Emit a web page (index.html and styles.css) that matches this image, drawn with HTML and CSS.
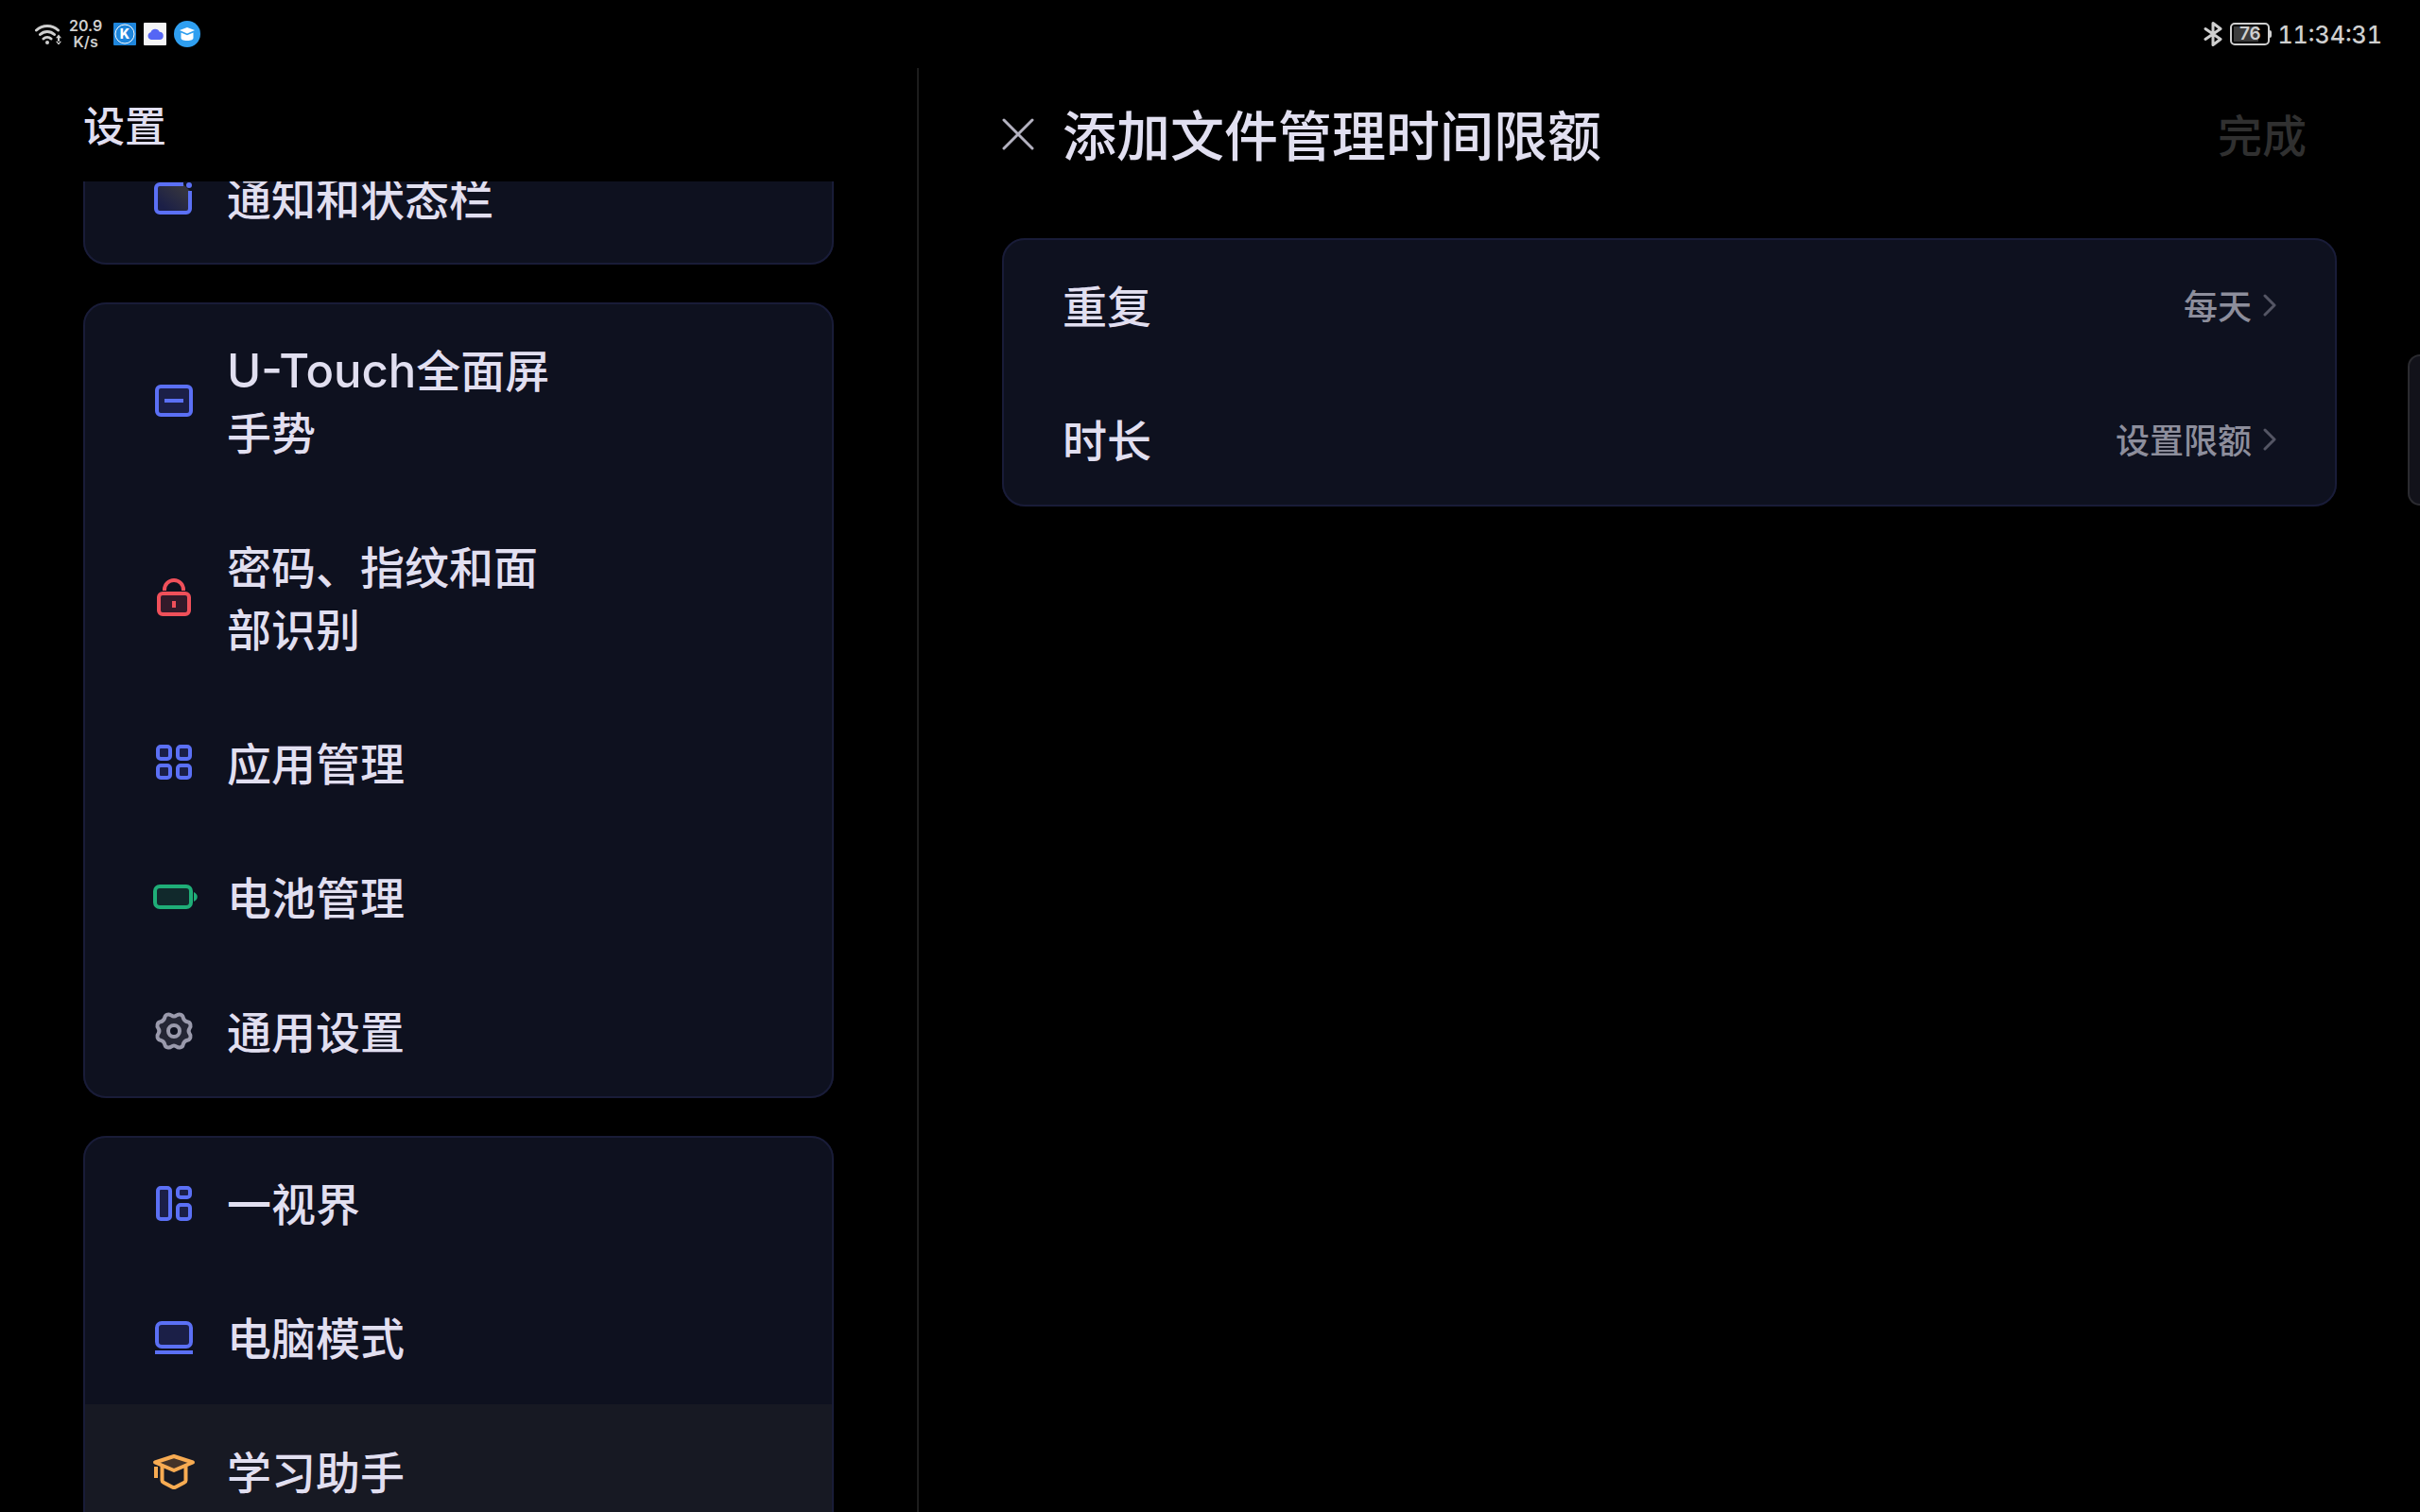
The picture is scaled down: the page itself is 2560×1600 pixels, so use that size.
FILE: index.html
```html
<!DOCTYPE html>
<html lang="zh-CN">
  <head>
    <meta charset="utf-8" />
    <title>设置</title>
    <meta name="viewport" content="width=device-width, initial-scale=1" />
    <link rel="stylesheet" href="styles.css" />
  </head>
  <body>
    <header class="status-bar">
      <div class="status-group">
        <svg class="wifi" viewBox="0 0 28 24" aria-hidden="true">
          <path d="M1.5 8a17 17 0 0 1 23 0M5.500 12.500a11 11 0 0 1 15 0M9 17a6 6 0 0 1 8 0" />
          <circle cx="13" cy="21" r="2" />
          <path class="solid" d="M25 12.500l3 3.700h-6zM25 23.500l3-3.700h-6zM24 15h2v6h-2z" />
        </svg>
        <div class="speed"><span>20.9</span><span>K/s</span></div>
        <svg class="app-icon app-k" viewBox="0 0 24 24" aria-hidden="true">
          <rect width="24" height="24" rx="1" fill="#1f86dc" />
          <circle cx="12" cy="12" r="10" fill="none" stroke="#fff" stroke-width="1" />
          <text x="12" y="17" text-anchor="middle">K</text>
        </svg>
        <svg class="app-icon" viewBox="0 0 24 24" aria-hidden="true">
          <rect width="24" height="24" rx="1" fill="#f4f4f6" />
          <path d="M8 18a4 4 0 0 1-.6-7.800A5 5 0 0 1 16.800 9.800 4.100 4.100 0 0 1 16.500 18z" fill="#5566f5" />
        </svg>
        <svg class="app-round" viewBox="0 0 28 28" aria-hidden="true">
          <circle cx="14" cy="14" r="14" fill="#2f9ff0" />
          <path d="M14 7l8 3-8 3.500-8-3.500zM7.500 12.500l6.500 2.800 6.500-2.800v5.500c0 2-2 3-6.500 3s-6.500-1-6.500-3z" fill="#fff" />
        </svg>
      </div>
      <div class="status-group">
        <svg class="bluetooth" viewBox="0 0 20 28" aria-hidden="true">
          <path d="M2 8.500l16 11-8 6v-23l8 6-16 11" />
        </svg>
        <div class="battery"><span>76</span></div>
        <time class="clock">11:34:31</time>
      </div>
    </header>

    <div class="layout">
      <aside class="sidebar">
        <h1 class="sidebar-title">设置</h1>
        <nav class="menu-view">
          <div class="menu">
            <div class="card">
              <a class="item" href="#">
                <svg class="icon blue" viewBox="0 0 48 48" aria-hidden="true">
                  <defs>
                    <linearGradient id="glow" x1="0" y1="1" x2="1" y2="0">
                      <stop offset="0.2" stop-color="#1b1f47" />
                      <stop offset="0.8" stop-color="#34343e" />
                    </linearGradient>
                  </defs>
                  <path fill="url(#glow)" d="M34 10H9a4 4 0 0 0-4 4v22a4 4 0 0 0 4 4h28a4 4 0 0 0 4-4V17" />
                  <circle class="dot" cx="40" cy="11" r="3" />
                </svg>
                <span class="label">通知和状态栏</span>
              </a>
            </div>

            <div class="card">
              <a class="item" href="#">
                <svg class="icon blue" viewBox="0 0 48 48" aria-hidden="true">
                  <rect x="6" y="9" width="36" height="30" rx="4" />
                  <path d="M14 24h20" />
                </svg>
                <span class="label"><span class="latin">U-Touch</span>全面屏手势</span>
              </a>
              <a class="item" href="#">
                <svg class="icon red" viewBox="0 0 48 48" aria-hidden="true">
                  <rect x="8" y="20" width="32" height="22" rx="4" />
                  <path class="line" d="M14 17v-1a10 10 0 0 1 20 0v1M24 28v7" />
                </svg>
                <span class="label">密码、指纹和面部识别</span>
              </a>
              <a class="item" href="#">
                <svg class="icon blue" viewBox="0 0 48 48" aria-hidden="true">
                  <rect x="7" y="7" width="13" height="13" rx="3" />
                  <rect x="28" y="7" width="13" height="13" rx="3" />
                  <rect x="7" y="27" width="13" height="13" rx="3" />
                  <rect x="28" y="27" width="13" height="13" rx="3" />
                </svg>
                <span class="label">应用管理</span>
              </a>
              <a class="item" href="#">
                <svg class="icon green" viewBox="0 0 48 48" aria-hidden="true">
                  <rect x="4" y="13" width="38" height="22" rx="5" />
                  <path class="dot" d="M45 19c5 2 5 8 0 10z" />
                </svg>
                <span class="label">电池管理</span>
              </a>
              <a class="item" href="#">
                <svg class="icon grey" viewBox="-24 -24 48 48" aria-hidden="true">
                  <path d="M-2.800-16.600Q0-14.500 2.800-16.600C5-18.600 9-17.300 9.500-15Q10.400-10.400 15-9.500C17.300-9 18.600-5 16.600-2.800Q14.500 0 16.600 2.800C18.600 5 17.300 9 15 9.500Q10.400 10.400 9.500 15C9 17.300 5 18.600 2.800 16.600Q0 14.500-2.800 16.600C-5 18.600-9 17.300-9.500 15Q-10.400 10.400-15 9.500C-17.300 9-18.600 5-16.600 2.800Q-14.500 0-16.600-2.800C-18.600-5-17.300-9-15-9.500Q-10.400-10.400-9.500-15C-9-17.300-5-18.600-2.800-16.600Z" />
                  <circle class="hole" r="6" />
                </svg>
                <span class="label">通用设置</span>
              </a>
            </div>

            <div class="card">
              <a class="item" href="#">
                <svg class="icon blue" viewBox="0 0 48 48" aria-hidden="true">
                  <rect x="7" y="8" width="13" height="33" rx="3" />
                  <rect x="28" y="8" width="13" height="10" rx="3" />
                  <rect x="28" y="26" width="13" height="15" rx="3" />
                </svg>
                <span class="label">一视界</span>
              </a>
              <a class="item" href="#">
                <svg class="icon blue" viewBox="0 0 48 48" aria-hidden="true">
                  <rect x="6" y="9" width="36" height="25" rx="5" />
                  <path d="M4 40h40" />
                </svg>
                <span class="label">电脑模式</span>
              </a>
              <a class="item selected" href="#" aria-current="page">
                <svg class="icon orange" viewBox="0 0 48 48" aria-hidden="true">
                  <path class="line" d="M11.500 19v14.500q0 1.500 1.500 2.200l9.500 5q1.500.7 3 0l9.500-5q1.500-.7 1.500-2.200V19" />
                  <path d="M24 8L4 14.500 24 23l20-8.500z" />
                  <path d="M5 19v12" />
                </svg>
                <span class="label">学习助手</span>
              </a>
            </div>
          </div>
        </nav>
      </aside>

      <main class="detail">
        <div class="toolbar">
          <button class="close" type="button" aria-label="关闭">
            <svg viewBox="0 0 34 34" aria-hidden="true"><path d="M2 2l30 30M32 2L2 32" /></svg>
          </button>
          <h2 class="toolbar-title">添加文件管理时间限额</h2>
          <button class="done" type="button" disabled>完成</button>
        </div>
        <div class="card">
          <button class="option" type="button">
            <span class="option-name">重复</span>
            <span class="option-value">每天</span>
            <svg class="chevron" viewBox="0 0 14 24" aria-hidden="true"><path d="M2 2l10 10L2 22" /></svg>
          </button>
          <button class="option" type="button">
            <span class="option-name">时长</span>
            <span class="option-value">设置限额</span>
            <svg class="chevron" viewBox="0 0 14 24" aria-hidden="true"><path d="M2 2l10 10L2 22" /></svg>
          </button>
        </div>
      </main>
    </div>

    <div class="edge-panel"></div>
  </body>
</html>
```

FILE: styles.css
```css
* {
  box-sizing: border-box;
}
body {
  margin: 0;
  height: 100vh;
  display: flex;
  flex-direction: column;
  position: relative;
  overflow: hidden;
  background-color: #000;
  color: #e1dff0;
  font-family: Inter, "Noto Sans CJK SC", sans-serif;
  font-weight: 500;
}
h1,
h2 {
  margin: 0;
  font-weight: 500;
}
button {
  padding: 0;
  border: none;
  background: none;
  color: inherit;
  font: inherit;
}
svg {
  flex: none;
  fill: none;
}

/* status bar */
.status-bar {
  flex: none;
  height: 72px;
  padding: 0 40px 0 37px;
  display: flex;
  align-items: center;
  justify-content: space-between;
  color: #cfcfcf;
}
.status-group {
  display: flex;
  align-items: center;
  gap: 8px;
}
.wifi {
  width: 28px;
  height: 24px;
  stroke: #cfcfcf;
  stroke-width: 3;
  stroke-linecap: round;
}
.wifi circle,
.wifi .solid {
  fill: #cfcfcf;
  stroke: none;
}
.speed {
  display: flex;
  flex-direction: column;
  align-items: center;
  margin-right: 4px;
  font-size: 16px;
  font-weight: 600;
  line-height: 17px;
}
.app-icon {
  width: 24px;
  height: 24px;
}
.app-k text {
  fill: #fff;
  font-size: 14px;
  font-weight: 800;
}
.app-round {
  width: 28px;
  height: 28px;
}
.bluetooth {
  width: 20px;
  height: 28px;
  stroke: #cfcfcf;
  stroke-width: 3;
  stroke-linejoin: round;
  stroke-linecap: round;
}
.battery {
  position: relative;
  width: 42px;
  height: 24px;
  padding: 2px;
  border: 2px solid #cfcfcf;
  border-radius: 5px;
  font-size: 19px;
  font-weight: 600;
  line-height: 16px;
  text-align: center;
}
.battery span {
  display: block;
  background: linear-gradient(90deg, #3c3c3c 76%, transparent 76%);
}
.battery::after {
  content: "";
  position: absolute;
  top: 6px;
  right: -4px;
  width: 2px;
  height: 8px;
  border-radius: 0 2px 2px 0;
  background-color: #cfcfcf;
}
.clock {
  padding-top: 2px;
  font-size: 25px;
  font-variant-numeric: tabular-nums;
}

/* two panes */
.layout {
  flex: 1;
  min-height: 0;
  display: grid;
  grid-template-columns: 97fr 159fr;
}
.sidebar {
  min-height: 0;
  padding: 0 88px;
  display: flex;
  flex-direction: column;
}
.sidebar-title {
  flex: none;
  height: 120px;
  font-size: 44px;
  line-height: 124px;
}
.menu-view {
  flex: 1;
  min-height: 0;
  overflow: hidden;
}
/* list is scrolled a little way down */
.menu {
  margin-top: -54px;
  display: flex;
  flex-direction: column;
  gap: 40px;
}
.card {
  overflow: hidden;
  border-radius: 24px;
  background-color: #0e111f;
  outline: 2px solid #191c38;
  outline-offset: -2px;
}
.item {
  padding: 36px 72px;
  display: flex;
  align-items: center;
  gap: 32px;
  color: inherit;
  text-decoration: none;
}
.item.selected {
  background-color: #171923;
}
.label {
  max-width: 360px;
  padding-top: 4px;
  font-size: 47px;
  line-height: 66px;
}
.latin {
  font-size: 49px;
  line-height: 1;
}

/* icons */
.icon {
  width: 48px;
  height: 48px;
  overflow: visible;
  stroke: currentColor;
  stroke-width: 4;
  stroke-linejoin: round;
}
.icon .line {
  fill: none;
}
.icon .dot {
  fill: currentColor;
  stroke: none;
}
.blue {
  color: #5b70f5;
  fill: #1b1f47;
}
.red {
  color: #f0505a;
  fill: #331a2a;
}
.green {
  color: #1fae78;
  fill: #11292c;
}
.grey {
  color: #9a9aac;
  fill: #242634;
}
.grey .hole {
  fill: #0e111f;
}
.orange {
  color: #f7ab52;
  fill: #443328;
}

/* right pane */
.detail {
  padding: 0 88px;
  border-left: 2px solid #1c1c1c;
}
.toolbar {
  height: 180px;
  padding: 0 32px 40px 0;
  display: flex;
  align-items: center;
}
.close {
  display: flex;
  margin-right: 30px;
}
.close svg {
  width: 34px;
  height: 34px;
  stroke: #b4b2c0;
  stroke-width: 3;
  stroke-linecap: round;
}
.toolbar-title {
  flex: 1;
  padding-bottom: 4px;
  font-size: 57px;
}
.done {
  padding-bottom: 4px;
  color: #303030;
  font-size: 47px;
}
.option {
  width: 100%;
  padding: 36px 64px;
  display: flex;
  align-items: center;
  gap: 12px;
  line-height: 66px;
}
.option-name,
.option-value {
  padding-top: 4px;
}
.option-name {
  flex: 1;
  text-align: left;
  font-size: 47px;
}
.option-value {
  color: #8d8e9c;
  font-size: 36px;
}
.chevron {
  width: 14px;
  height: 24px;
  stroke: #545564;
  stroke-width: 3;
  stroke-linecap: round;
  stroke-linejoin: round;
}

/* handle of the panel that slides in from the right edge */
.edge-panel {
  position: absolute;
  top: 375px;
  right: 0;
  width: 13px;
  height: 160px;
  border: 2px solid #2b2b30;
  border-right: none;
  border-radius: 16px 0 0 16px;
  background-color: #12121a;
}
```
